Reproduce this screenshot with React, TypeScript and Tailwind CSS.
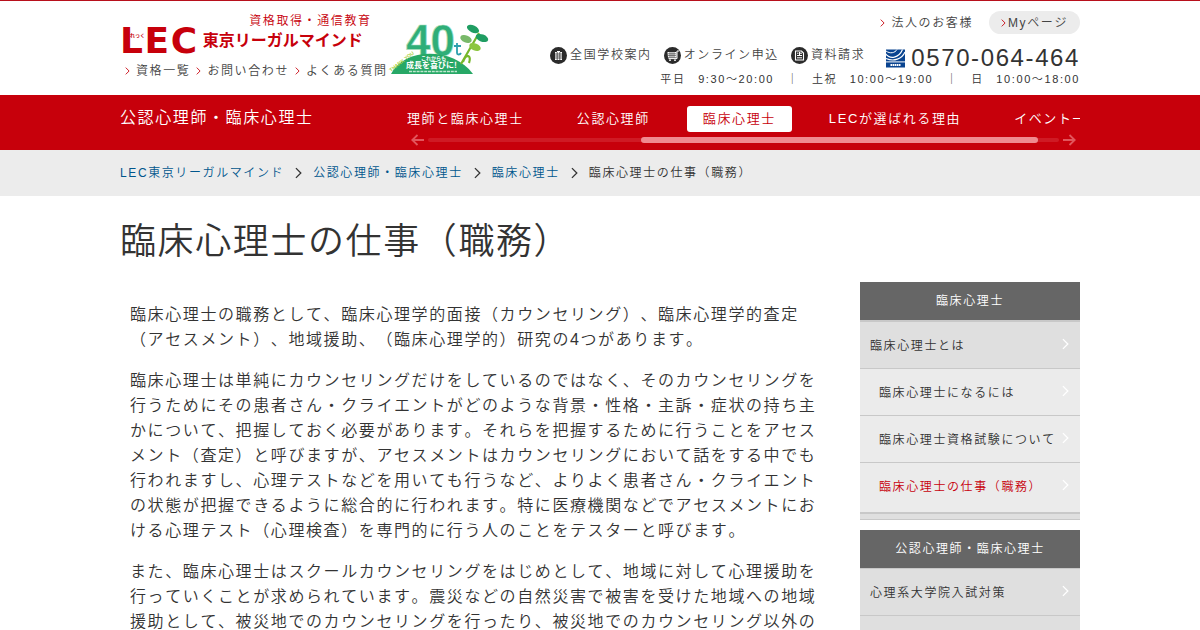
import type { ReactNode } from "react";
import clsx from "clsx";

const headerLinks = ["資格一覧", "お問い合わせ", "よくある質問"];

const navItems = [
  { label: "理師と臨床心理士", first: true },
  { label: "公認心理師" },
  { label: "臨床心理士", active: true },
  { label: "LECが選ばれる理由" },
  { label: "イベント一覧" },
];

const crumbs = ["LEC東京リーガルマインド", "公認心理師・臨床心理士", "臨床心理士"];

const subItems = [
  { label: "臨床心理士になるには" },
  { label: "臨床心理士資格試験について" },
  { label: "臨床心理士の仕事（職務）", current: true },
];

const Chevron = ({ className }: { className?: string }) => (
  <svg viewBox="0 0 6 10" fill="none" stroke="currentColor" strokeWidth="1.1" className={clsx("shrink-0", className)} aria-hidden="true">
    <path d="M0.8 0.8L5 5L0.8 9.2" />
  </svg>
);

const Arrow = ({ flip }: { flip?: boolean }) => (
  <svg viewBox="0 0 13 12" fill="none" stroke="currentColor" strokeWidth="1.8" className={clsx("h-3 w-[13px] shrink-0 text-[#e2555c]", flip && "rotate-180")} aria-hidden="true">
    <path d="M0 6H11.5M6.5 1L11.7 6L6.5 11" />
  </svg>
);

const BuildingIcon = () => (
  <svg viewBox="0 0 17 17" className="size-[17px] shrink-0" aria-hidden="true">
    <circle cx="8.5" cy="8.5" r="8.5" fill="#2b2b2b" />
    <path d="M5 5H7V4H10V5H12V13H5Z" fill="#fff" />
    <path d="M5 7H12M5 9H12M5 11H12M7.2 5V13M9.8 5V13" stroke="#2b2b2b" strokeWidth="0.7" />
  </svg>
);

const CartIcon = () => (
  <svg viewBox="0 0 17 17" className="size-[17px] shrink-0" aria-hidden="true">
    <circle cx="8.5" cy="8.5" r="8.5" fill="#2b2b2b" />
    <path d="M3.5 5H12.5V10.5H4Z" fill="#fff" />
    <path d="M15 4H13V11.6H4.5" stroke="#fff" fill="none" />
    <path d="M4 6.8H12M4 8.6H12M6 5V10.5M8 5V10.5M10 5V10.5" stroke="#2b2b2b" strokeWidth="0.6" />
    <circle cx="6" cy="13.2" r="0.9" fill="#fff" />
    <circle cx="11" cy="13.2" r="0.9" fill="#fff" />
  </svg>
);

const DocIcon = () => (
  <svg viewBox="0 0 17 17" className="size-[17px] shrink-0" aria-hidden="true">
    <circle cx="8.5" cy="8.5" r="8.5" fill="#2b2b2b" />
    <path d="M4.5 4H10.5L12.5 6V13H4.5Z" fill="none" stroke="#fff" strokeWidth="1.1" />
    <path d="M6 6.2H7.5M9 6.2H11M6 8.5H11M6 10.8H11M8.5 5V8.5" stroke="#fff" />
  </svg>
);

const NaviDialIcon = () => (
  <svg viewBox="0 0 22 19" className="h-[19px] w-[22px] shrink-0" aria-hidden="true">
    <rect x="1" y="0.5" width="19" height="18" fill="#0a4490" />
    <path d="M0 4C5 11 14 9 17.5 0.5M1 9.5C9 13 17 10 20 3" fill="none" stroke="#fff" strokeWidth="1.2" />
    <path d="M1 2C5 5 10 4 12 0.5" fill="none" stroke="#fff" />
    <rect x="1" y="12.4" width="21" height="1" fill="#fff" />
    <path d="M5.5 16H15.5" stroke="#fff" strokeWidth="2" strokeDasharray="1.6 0.5" />
  </svg>
);

const Anniversary = () => (
  <svg viewBox="0 0 102 56" className="h-14 w-[102px] shrink-0 tracking-normal" role="img" aria-label="40th">
    <text x="18" y="35" fontSize="44" fontWeight="700" fontFamily="Liberation Sans" fill="#2fae78" stroke="#a9dfbd" strokeWidth="0.7">40</text>
    <path d="M3 53C16 26 66 26 85 53Z" fill="#27a866" />
    <path d="M69 22V32C69 34 72 34 73 32M66 25H73" fill="none" stroke="#2b9fae" strokeWidth="1.8" />
    <path d="M73 43L91 12M75 41C78 32 84 34 81 42" fill="none" stroke="#76b82a" strokeWidth="2.2" />
    <ellipse cx="85" cy="8" rx="6.5" ry="3.6" transform="rotate(25 85 8)" fill="#1f9d62" />
    <ellipse cx="94" cy="17" rx="6.5" ry="3.6" transform="rotate(20 94 17)" fill="#1f9d62" />
    <ellipse cx="78" cy="18" rx="6" ry="3.6" transform="rotate(22 78 18)" fill="#79b96a" />
    <ellipse cx="87" cy="26" rx="6" ry="3.6" transform="rotate(22 87 26)" fill="#8cc63f" />
    <text x="33" y="39" fontSize="5" fontWeight="700" fontFamily="Noto Sans CJK JP" fill="#fff">これからも</text>
    <text x="18" y="47" fontSize="8" fontWeight="700" fontFamily="Noto Sans CJK JP" fill="#fff">成長を喜びに!</text>
    <path d="M21 50.5H69" stroke="#bfe6cf" strokeWidth="1.4" strokeDasharray="3 0.8" />
    <text x="3" y="51" fontSize="5" fontWeight="700" fontFamily="Liberation Sans" fill="#a8cf38" transform="rotate(-38 3 51)">THANK YOU</text>
  </svg>
);

const IconLink = ({ icon, children }: { icon: ReactNode; children: ReactNode }) => (
  <a href="#" className="flex items-center gap-[3px] text-[#444]">
    {icon}
    {children}
  </a>
);

const Header = () => (
  <header className="border-t border-[#b8101c] text-xs leading-4">
    <div className="mx-auto flex h-[94px] max-w-[960px] justify-between">
      <div className="flex items-start">
        <div className="pt-3">
          <p className="pr-4 text-right text-[#c7000b]">資格取得・通信教育</p>
          <a href="#" className="relative flex h-6 items-center gap-1 whitespace-nowrap text-[#c7000b]">
            <span className="font-['DejaVu_Sans'] text-4xl leading-6 font-bold">LEC</span>
            <span className="absolute top-0.5 left-2.5 text-[5px] leading-2 font-bold tracking-normal">れっく</span>
            <span className="text-base leading-6 font-bold tracking-normal">東京リーガルマインド</span>
          </a>
          <ul className="flex gap-1.5 pt-2.5 pl-[5px]">
            {headerLinks.map((label) => (
              <li key={label}>
                <a href="#" className="flex items-center gap-1.5 text-[#444]">
                  <Chevron className="h-2 w-[5px] text-[#c7000b]" />
                  {label}
                </a>
              </li>
            ))}
          </ul>
        </div>
        <div className="pt-5">
          <Anniversary />
        </div>
      </div>

      <div className="flex flex-col items-end whitespace-nowrap pt-2.5">
        <div className="flex items-center gap-4">
          <a href="#" className="flex items-center gap-1.5 text-[#444]">
            <Chevron className="h-2 w-[5px] text-[#c7000b]" />
            法人のお客様
          </a>
          <a href="#" className="flex h-[23px] items-center gap-0.5 rounded-full bg-[#ececec] px-3 text-[#444]">
            <Chevron className="h-2 w-[5px] text-[#c7000b]" />
            Myページ
          </a>
        </div>
        <div className="flex items-center pt-2.5">
          <div className="flex gap-3 pr-5 pb-1.5">
            <IconLink icon={<BuildingIcon />}>全国学校案内</IconLink>
            <IconLink icon={<CartIcon />}>オンライン申込</IconLink>
            <IconLink icon={<DocIcon />}>資料請求</IconLink>
          </div>
          <NaviDialIcon />
          <span className="pl-1 text-2xl leading-7 text-[#333]">0570-064-464</span>
        </div>
        <p className="text-[11px] leading-[14px] text-[#333]">平日　9:30～20:00　｜　土祝　10:00～19:00　｜　日　10:00～18:00</p>
      </div>
    </div>
  </header>
);

const CategoryNav = () => (
  <div className="bg-[#c7000b] text-white">
    <div className="mx-auto flex h-[55px] max-w-[960px] justify-between">
      <p className="pt-[11px] leading-6">公認心理師・臨床心理士</p>
      <nav className="w-[673px] overflow-hidden pt-[11px] text-[13px]">
        <ul className="flex gap-[21px] whitespace-nowrap">
          {navItems.map((item) => (
            <li key={item.label}>
              <a
                href="#"
                className={clsx(
                  "block rounded-[3px] pr-4 leading-[26px]",
                  !item.first && "pl-4",
                  item.active && "bg-white text-[#c7000b]"
                )}
              >
                {item.label}
              </a>
            </li>
          ))}
        </ul>
        <div className="flex items-center gap-1 pt-0.5 pr-1 pl-1">
          <Arrow flip />
          <div className="flex h-1 grow rounded-full bg-[#cf1a24]">
            <div className="ml-[213px] h-[6px] w-[397px] -translate-y-px rounded-full bg-[#f08a90]" />
          </div>
          <Arrow />
        </div>
      </nav>
    </div>
  </div>
);

const SideHeading = ({ children }: { children: ReactNode }) => (
  <h2 className="bg-[#666] text-center leading-[38px] text-white">{children}</h2>
);

const SideLink = ({ label, sub, current }: { label: string; sub?: boolean; current?: boolean }) => (
  <a
    href="#"
    className={clsx(
      "flex h-[46px] items-center justify-between pr-[11px]",
      sub ? "bg-[#ebebeb] pl-[19px]" : "bg-[#dfdfdf] pl-2.5",
      current && "text-[#c7000b]"
    )}
  >
    <span className="pt-0.5">{label}</span>
    <Chevron className="mb-0.5 h-3 w-[7px] text-white" />
  </a>
);

const Sidebar = () => (
  <aside className="w-[220px] shrink-0 space-y-2.5 text-xs whitespace-nowrap">
    <section>
      <SideHeading>臨床心理士</SideHeading>
      <ul className="border-t-2 border-b border-[#c8c8c8] bg-[#dfdfdf] pb-[5px]">
        <li>
          <SideLink label="臨床心理士とは" />
          <ul className="border-b-2 border-[#c8c8c8] bg-[#ebebeb] pb-[3px]">
            {subItems.map((item) => (
              <li key={item.label} className="border-t border-[#c8c8c8]">
                <SideLink label={item.label} sub current={item.current} />
              </li>
            ))}
          </ul>
        </li>
      </ul>
    </section>
    <section>
      <SideHeading>公認心理師・臨床心理士</SideHeading>
      <ul>
        <li className="border-t border-[#c8c8c8]">
          <SideLink label="心理系大学院入試対策" />
        </li>
        <li className="h-12 border-t border-[#c8c8c8] bg-[#dfdfdf]" />
      </ul>
    </section>
  </aside>
);

export default function App() {
  return (
    <div className="h-screen overflow-hidden bg-white font-['Liberation_Sans','Noto_Sans_CJK_JP',sans-serif] text-base font-[350] tracking-widest text-[#333] [font-kerning:none] [text-spacing-trim:space-all]" lang="ja">
      <Header />
      <CategoryNav />

      <nav className="bg-[#ececec]" aria-label="パンくず">
        <ol className="mx-auto flex h-[46px] max-w-[960px] items-center text-xs whitespace-nowrap">
          {crumbs.map((label) => (
            <li key={label} className="flex items-center">
              <a href="#" className="text-[#00568c]">{label}</a>
              <Chevron className="mx-[11px] h-3 w-[7px]" />
            </li>
          ))}
          <li>臨床心理士の仕事（職務）</li>
        </ol>
      </nav>

      <main className="mx-auto max-w-[960px]">
        <h1 className="pt-[21px] text-4xl leading-[50px]">臨床心理士の仕事（職務）</h1>
        <div className="flex items-start justify-between pt-[15px]">
          <article className="w-[720px] space-y-4 p-2.5 pt-5 leading-[25px]">
            <p>
              臨床心理士の職務として、臨床心理学的面接（カウンセリング）、臨床心理学的査定（アセスメント）、地域援助、（臨床心理学的）研究の4つがあります。
            </p>
            <p>
              臨床心理士は単純にカウンセリングだけをしているのではなく、そのカウンセリングを行うためにその患者さん・クライエントがどのような背景・性格・主訴・症状の持ち主かについて、把握しておく必要があります。それらを把握するために行うことをアセスメント（査定）と呼びますが、アセスメントはカウンセリングにおいて話をする中でも行われますし、心理テストなどを用いても行うなど、よりよく患者さん・クライエントの状態が把握できるように総合的に行われます。特に医療機関などでアセスメントにおける心理テスト（心理検査）を専門的に行う人のことをテスターと呼びます。
            </p>
            <p>
              また、臨床心理士はスクールカウンセリングをはじめとして、地域に対して心理援助を行っていくことが求められています。震災などの自然災害で被害を受けた地域への地域援助として、被災地でのカウンセリングを行ったり、被災地でのカウンセリング以外の
            </p>
          </article>
          <Sidebar />
        </div>
      </main>
    </div>
  );
}
